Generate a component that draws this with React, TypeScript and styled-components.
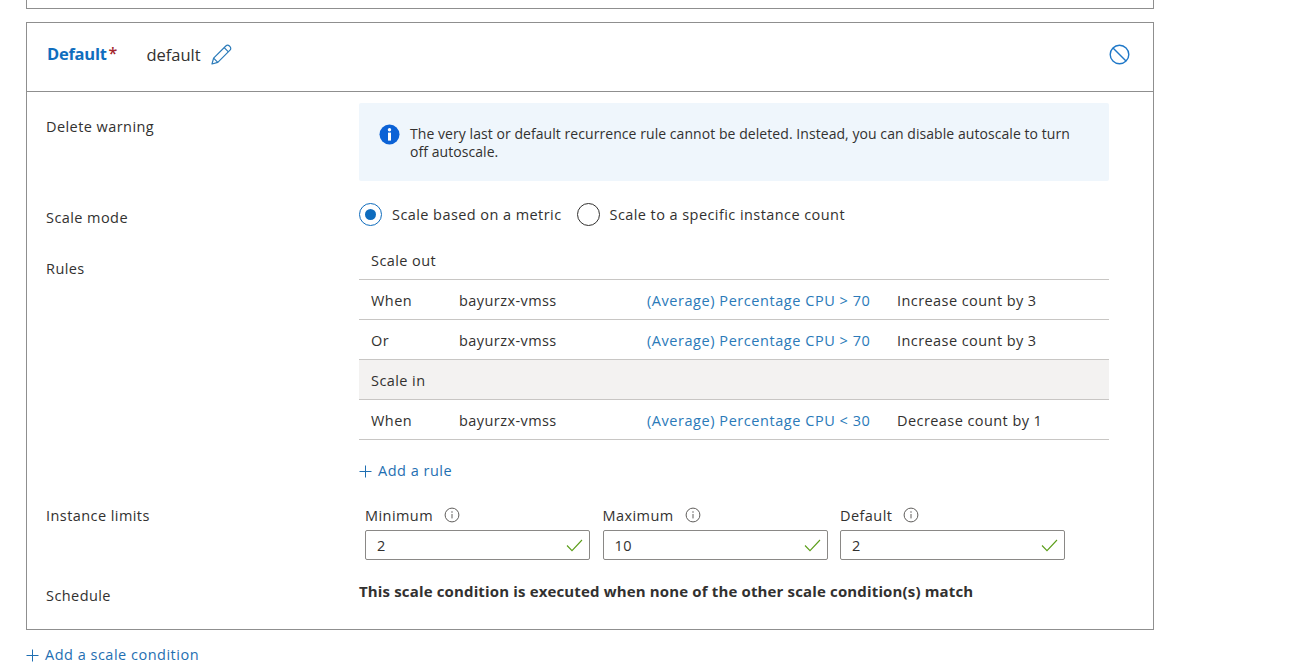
import React from "react";
import styled, { createGlobalStyle } from "styled-components";

const GlobalStyle = createGlobalStyle`
  html, body {
    margin: 0;
    padding: 0;
    background: #fff;
    overflow: hidden;
  }
  body {
    font-family: "Open Sans", "Noto Sans", sans-serif;
    font-size: 14.5px;
    letter-spacing: 0.43px;
    color: #323130;
  }
`;

const Page = styled.div`
  width: 1128px;
  margin-left: 26px;
  height: 666px;
  overflow: hidden;
`;

const PrevCard = styled.div`
  height: 8px;
  border: 1px solid #8f8f8f;
  border-top: none;
  margin-bottom: 13px;
`;

const Card = styled.section`
  border: 1px solid #8f8f8f;
  height: 608px;
  box-sizing: border-box;
  display: flex;
  flex-direction: column;
`;

const CardHeader = styled.header`
  height: 69px;
  flex: none;
  box-sizing: border-box;
  border-bottom: 1px solid #8f8f8f;
  display: flex;
  align-items: center;
  padding: 0 23px 6px 20px;
`;

const Title = styled.span`
  font-size: 16.5px;
  font-weight: 700;
  color: #106ebe;
  letter-spacing: -0.25px;
  margin-bottom: 2px;
`;

const Star = styled.span`
  color: #a4262c;
  font-weight: 600;
  font-size: 16px;
  margin-left: 2px;
  margin-bottom: 2px;
  letter-spacing: 0;
`;

const ConditionName = styled.span`
  font-size: 16.5px;
  letter-spacing: 0;
  margin-left: 29px;
  margin-right: 10px;
`;

const HeaderSpacer = styled.div`
  flex: 1;
`;

const Body = styled.div`
  display: grid;
  grid-template-columns: 313px 750px;
  padding: 11px 0 0 19px;
`;

const Label = styled.div<{ $top: number }>`
  padding-top: ${(p) => p.$top}px;
  line-height: 20px;
`;

const Banner = styled.div`
  height: 78px;
  box-sizing: border-box;
  background: #eff6fc;
  border-radius: 2px;
  display: flex;
  padding: 21px 24px 0 20px;
  gap: 10px;
  line-height: 18px;
  font-size: 14px;
  letter-spacing: 0.06px;
`;

const BannerText = styled.div`
  padding-top: 1px;
`;

const BannerIcon = styled.svg`
  flex: none;
  width: 21px;
  height: 21px;
`;

const RadioRow = styled.div`
  display: flex;
  align-items: center;
  height: 24px;
  margin-top: 21px;
  margin-bottom: 14px;
`;

const RadioOption = styled.label`
  display: flex;
  align-items: center;
  gap: 10px;
  margin-right: 15px;
`;

const RadioCircle = styled.span<{ $checked?: boolean }>`
  width: 23px;
  height: 23px;
  box-sizing: border-box;
  border-radius: 50%;
  border: 1px solid ${(p) => (p.$checked ? "#0f6cbd" : "#323130")};
  display: flex;
  align-items: center;
  justify-content: center;
  &::after {
    content: "";
    display: ${(p) => (p.$checked ? "block" : "none")};
    width: 11px;
    height: 11px;
    border-radius: 50%;
    background: #0f6cbd;
  }
`;

const Table = styled.div`
  display: flex;
  flex-direction: column;
`;

const Row = styled.div<{ $shaded?: boolean }>`
  display: grid;
  grid-template-columns: 88px 188px 250px 1fr;
  align-items: center;
  height: 40px;
  box-sizing: border-box;
  padding: 2px 0 0 12px;
  border-bottom: 1px solid #c8c6c4;
  background: ${(p) => (p.$shaded ? "#f3f2f1" : "transparent")};
`;

const RuleLink = styled.a`
  color: #2a7ab9;
  letter-spacing: 0.55px;
`;

const AddLink = styled.a`
  display: flex;
  align-items: center;
  gap: 6px;
  color: #1f6fb2;
  line-height: 20px;
  letter-spacing: 0.5px;
`;

const AddRuleRow = styled.div`
  margin-top: 21px;
`;

const Limits = styled.div`
  display: grid;
  grid-template-columns: repeat(3, 225px);
  column-gap: 12.5px;
  margin: 24px 0 0 6px;
`;

const Field = styled.div`
  display: flex;
  flex-direction: column;
`;

const FieldLabel = styled.div`
  display: flex;
  align-items: center;
  gap: 11px;
  height: 20px;
  margin-bottom: 5px;
`;

const Input = styled.div`
  height: 30px;
  box-sizing: border-box;
  border: 1px solid #8a8886;
  border-radius: 2px;
  display: flex;
  align-items: center;
  justify-content: space-between;
  padding: 0 6px 0 11px;
`;

const ScheduleNote = styled.div`
  font-weight: 700;
  font-size: 15px;
  letter-spacing: 0.15px;
  line-height: 20px;
  margin-top: 21px;
`;

const Footer = styled.div`
  margin-top: 15px;
`;

const PencilIcon = () => (
  <svg width="21" height="21" viewBox="0 0 21 21" fill="none" stroke="#2a7ab9" strokeWidth="1.2" strokeLinejoin="round">
    <path d="M1 20l1.6-5.8L14.8 2c1-1 2.6-1 3.6 0l.6.6c1 1 1 2.6 0 3.6L6.8 18.4 1 20z" />
    <path d="M2.6 14.2l4.2 4.2M13.2 3.6l4.2 4.2" />
  </svg>
);

const DisableIcon = () => (
  <svg width="21" height="21" viewBox="0 0 21 21" fill="none" stroke="#1f78c8" strokeWidth="1.4">
    <circle cx="10.5" cy="10.5" r="9.3" />
    <path d="M4 4l13 13" />
  </svg>
);

const InfoOutline = () => (
  <svg width="16" height="16" viewBox="0 0 16 16" fill="none">
    <circle cx="8" cy="8" r="6.9" stroke="#605e5c" />
    <path d="M8 7v4.4" stroke="#605e5c" />
    <circle cx="8" cy="4.9" r="0.75" fill="#605e5c" />
  </svg>
);

const Check = () => (
  <svg width="17" height="13" viewBox="0 0 17 13" fill="none" stroke="#5c9e1a" strokeWidth="1.1">
    <path d="M1 6.5l5 5.2L16 1" />
  </svg>
);

const Plus = () => (
  <svg width="13" height="13" viewBox="0 0 13 13" stroke="#1f6fb2" strokeWidth="1">
    <path d="M6.5 0.5v12M0.5 6.5h12" />
  </svg>
);

const rules = [
  { head: "When", metric: "(Average) Percentage CPU > 70", action: "Increase count by 3" },
  { head: "Or", metric: "(Average) Percentage CPU > 70", action: "Increase count by 3" },
];

const limits = [
  { name: "Minimum", value: "2" },
  { name: "Maximum", value: "10" },
  { name: "Default", value: "2" },
];

const App = () => {
  return (
    <Page>
      <GlobalStyle />
      <PrevCard />
      <Card>
        <CardHeader>
          <Title>Default</Title>
          <Star>*</Star>
          <ConditionName>default</ConditionName>
          <PencilIcon />
          <HeaderSpacer />
          <DisableIcon />
        </CardHeader>
        <Body>
          <Label $top={14}>Delete warning</Label>
          <Banner>
            <BannerIcon viewBox="0 0 21 21">
              <circle cx="10.5" cy="10.5" r="10" fill="#0b62d6" />
              <circle cx="10.5" cy="5.8" r="1.7" fill="#fff" />
              <rect x="9" y="8.6" width="3" height="8" fill="#fff" />
            </BannerIcon>
            <BannerText>
              The very last or default recurrence rule cannot be deleted. Instead, you can disable autoscale to turn
              off autoscale.
            </BannerText>
          </Banner>

          <Label $top={27}>Scale mode</Label>
          <RadioRow>
            <RadioOption>
              <RadioCircle $checked />
              Scale based on a metric
            </RadioOption>
            <RadioOption>
              <RadioCircle />
              Scale to a specific instance count
            </RadioOption>
          </RadioRow>

          <Label $top={19}>Rules</Label>
          <Table>
            <Row>Scale out</Row>
            {rules.map((r) => (
              <Row key={r.head}>
                <span>{r.head}</span>
                <span>bayurzx-vmss</span>
                <RuleLink>{r.metric}</RuleLink>
                <span>{r.action}</span>
              </Row>
            ))}
            <Row $shaded>Scale in</Row>
            <Row>
              <span>When</span>
              <span>bayurzx-vmss</span>
              <RuleLink>{"(Average) Percentage CPU < 30"}</RuleLink>
              <span>Decrease count by 1</span>
            </Row>
            <AddRuleRow>
              <AddLink>
                <Plus />
                Add a rule
              </AddLink>
            </AddRuleRow>
          </Table>

          <Label $top={25}>Instance limits</Label>
          <Limits>
            {limits.map((l) => (
              <Field key={l.name}>
                <FieldLabel>
                  {l.name}
                  <InfoOutline />
                </FieldLabel>
                <Input>
                  {l.value}
                  <Check />
                </Input>
              </Field>
            ))}
          </Limits>

          <Label $top={26}>Schedule</Label>
          <ScheduleNote>This scale condition is executed when none of the other scale condition(s) match</ScheduleNote>
        </Body>
      </Card>
      <Footer>
        <AddLink>
          <Plus />
          Add a scale condition
        </AddLink>
      </Footer>
    </Page>
  );
};

export default App;
